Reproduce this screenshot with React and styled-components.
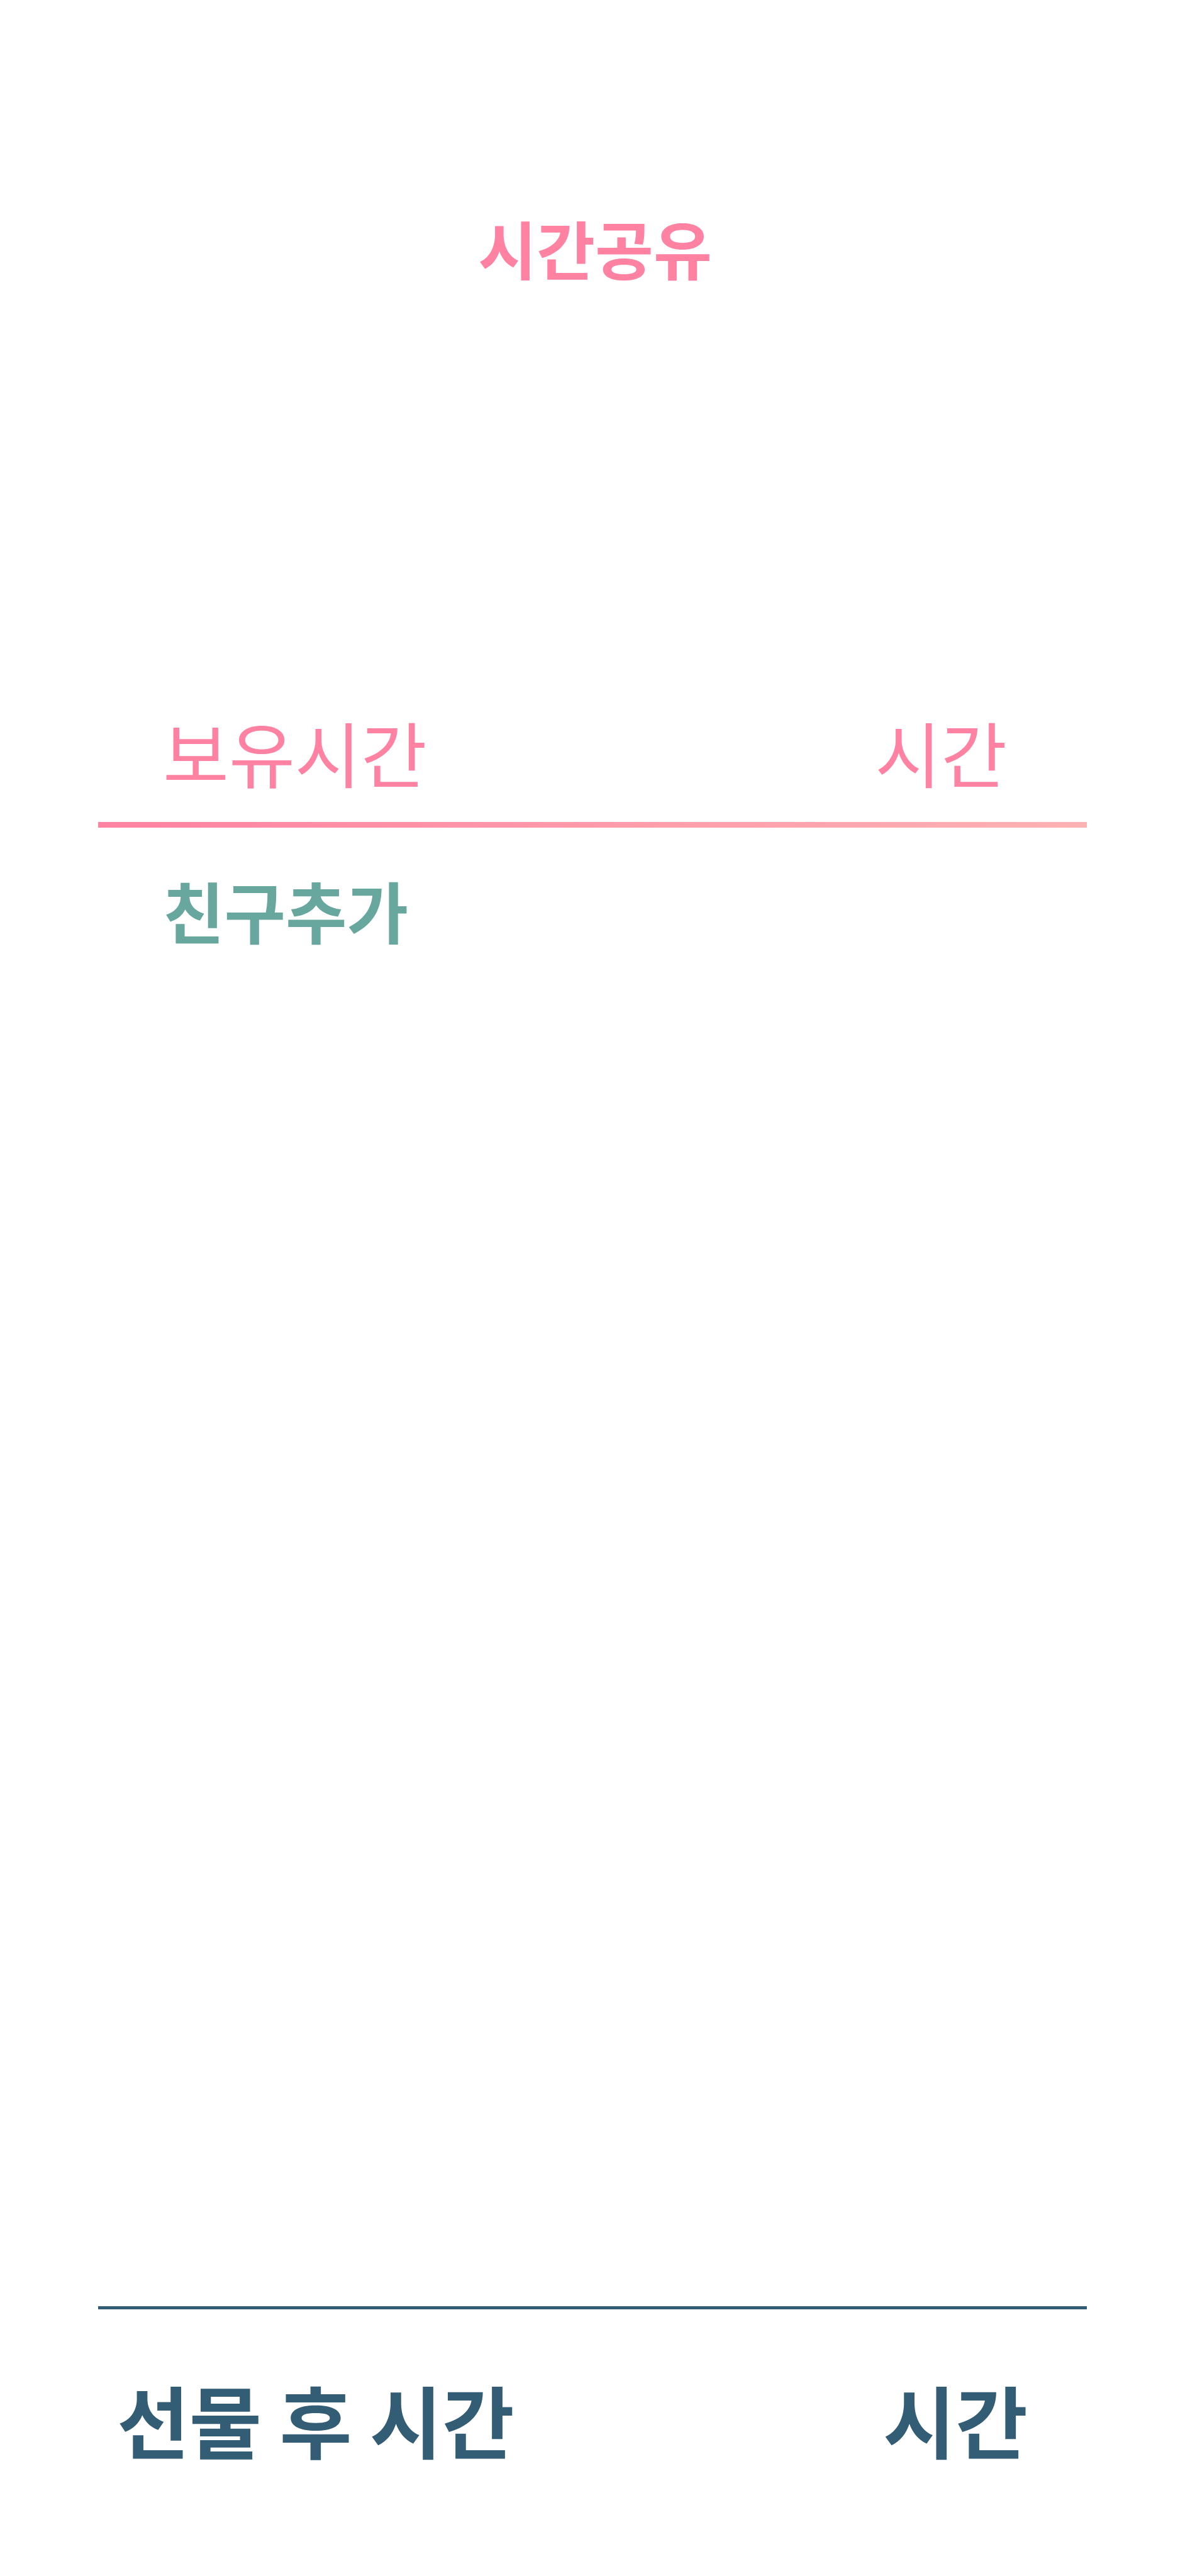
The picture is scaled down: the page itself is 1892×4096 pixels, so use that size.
import React from "react";
import styled, { createGlobalStyle } from "styled-components";

const Global = createGlobalStyle`
  * { box-sizing: border-box; }
  body { margin: 0; background: #ffffff; }
  h1, p { margin: 0; font-weight: inherit; }
`;

const Screen = styled.main`
  display: flex;
  flex-direction: column;
  min-height: 100vh;
  padding: 321px 164px 150px 156px;
  font-family: "Noto Sans CJK KR", sans-serif;
`;

const Title = styled.h1`
  padding-left: 8px;
  color: #ff82a2;
  font-size: 101px;
  font-weight: 700;
  line-height: 144px;
  text-align: center;
`;

const Balance = styled.section`
  display: flex;
  justify-content: space-between;
  margin-top: 640px;
  padding: 0 127px 0 103px;
  color: #ff82a2;
  font-size: 114px;
  font-weight: 400;
  line-height: 180px;
`;

const GradientRule = styled.div`
  height: 9px;
  margin-top: 22px;
  background: linear-gradient(90deg, #ff82a2, #ffb2b2);
`;

const AddFriend = styled.button`
  align-self: flex-start;
  margin: 50px 0 0 103px;
  padding: 0;
  border: 0;
  background: none;
  color: #68a79e;
  font-family: inherit;
  font-size: 106px;
  font-weight: 700;
  line-height: 160px;
`;

const Footer = styled.footer`
  display: flex;
  justify-content: space-between;
  margin-top: auto;
  padding: 74px 94px 0 30px;
  border-top: 5px solid #335d75;
  color: #335d75;
  font-size: 125px;
  font-weight: 700;
  line-height: 200px;
`;

export default function App() {
  return (
    <Screen>
      <Global />
      <Title>시간공유</Title>
      <Balance>
        <p>보유시간</p>
        <p>시간</p>
      </Balance>
      <GradientRule />
      <AddFriend type="button">친구추가</AddFriend>
      <Footer>
        <p>선물 후 시간</p>
        <p>시간</p>
      </Footer>
    </Screen>
  );
}
